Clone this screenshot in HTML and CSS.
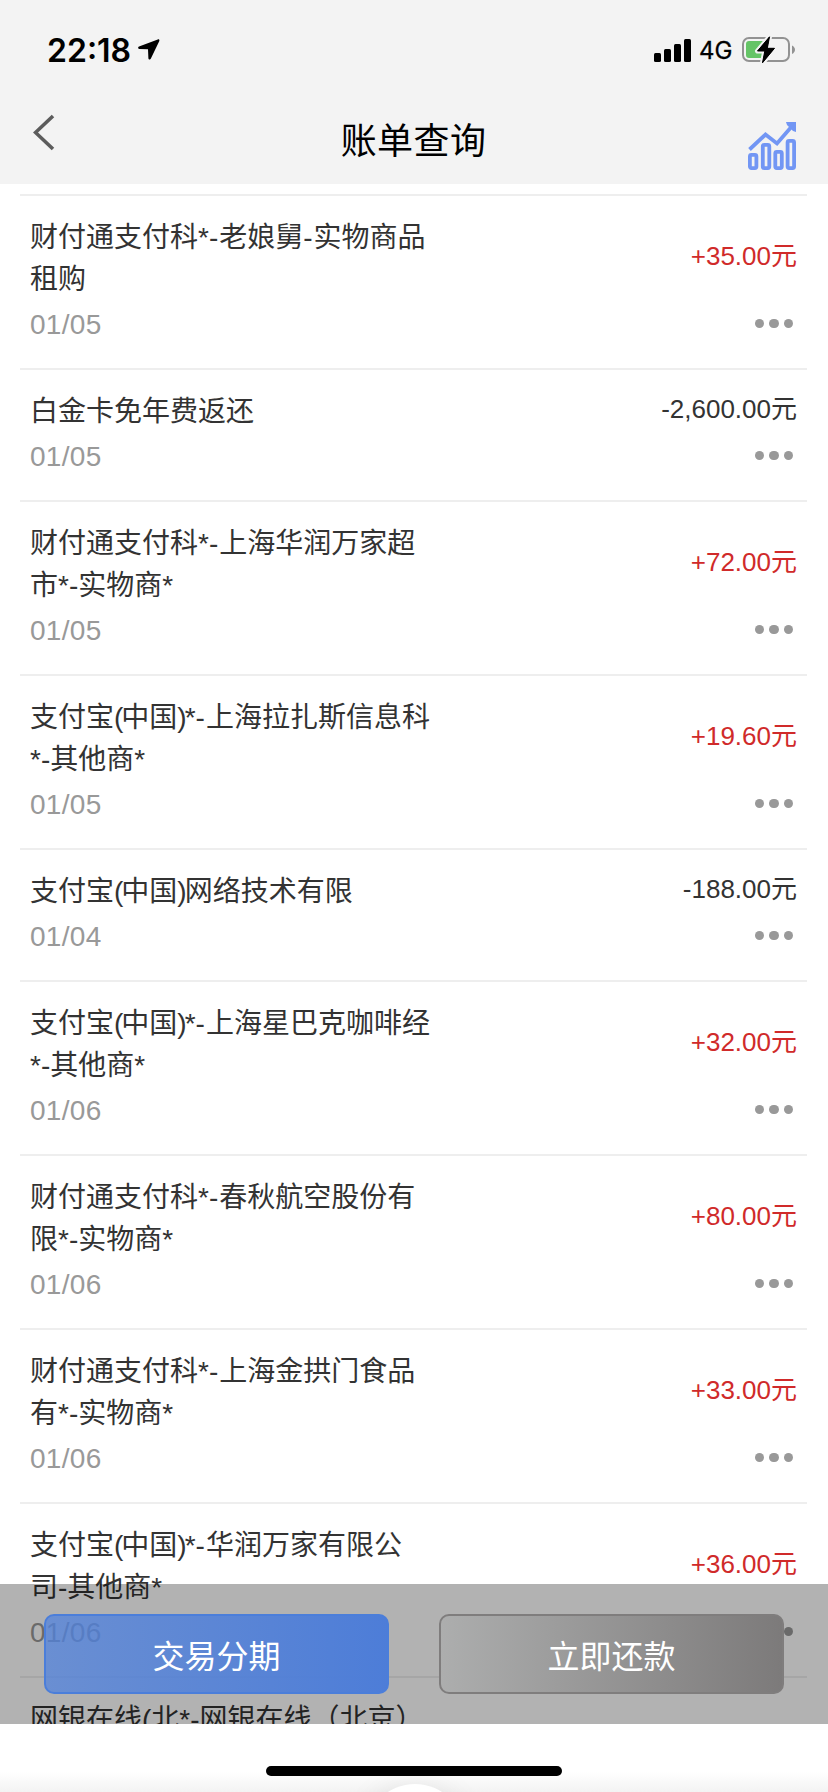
FILE: index.html
```html
<!DOCTYPE html>
<html lang="zh-CN">
<head>
<meta charset="utf-8">
<title>账单查询</title>
<link rel="stylesheet" href="styles.css">
</head>
<body>
<div class="screen">
  <header class="header">
    <div class="status">
      <div class="status-left">
        <span class="time">22:18</span>
        <svg class="location" width="22" height="22" viewBox="0 0 22 22"><path d="M19.8 .4 1 7.6C-.4 8.2 0 9.8 1.300 9.900L10 10.200 10.400 19.200C10.500 20.900 12.200 21 12.900 19.600L21.200 2.200C21.800 .9 21 0 19.800 .4Z"/></svg>
      </div>
      <div class="status-right">
        <svg class="signal" width="37" height="23" viewBox="0 0 37 23"><rect y="14" width="7" height="9" rx="1.500"/><rect x="10" y="10" width="7" height="13" rx="1.500"/><rect x="20" y="5" width="7" height="18" rx="1.500"/><rect x="30" width="7" height="23" rx="1.500"/></svg>
        <span class="network">4G</span>
        <svg class="battery" width="53" height="28" viewBox="0 0 53 28"><rect x="1" y="2" width="46" height="23" rx="6" fill="none" stroke="#929292" stroke-width="2"/><rect x="4" y="5" width="21" height="17" rx="3" fill="#65c466"/><path d="M50 9.500c4 2 4 6.500 0 8.500z" fill="#929292"/><path d="M27.500.8 15.500 15h7.300L20.500 26.800 32.500 12.300h-7.200z" fill="#000" stroke="#f3f3f3" stroke-width="5" paint-order="stroke" stroke-linejoin="round"/><path d="M27.500.8 15.500 15h7.300L20.500 26.800 32.500 12.300h-7.200z" fill="#000" stroke="#000" stroke-linejoin="round"/></svg>
      </div>
    </div>
    <nav class="navbar">
      <svg class="back" width="22" height="38" viewBox="0 0 22 38"><path d="M20 2 2.500 18.500 20 35" fill="none" stroke="#5c5c5c" stroke-width="3.600"/></svg>
      <h1 class="title">账单查询</h1>
      <svg class="chart" width="48" height="48" viewBox="0 0 48 48" fill="none" stroke="#7296f4" stroke-width="3.800"><rect x="1.900" y="32.900" width="6.500" height="13.200" rx="1.500"/><rect x="14.800" y="22.900" width="6.500" height="23.200" rx="1.500"/><rect x="27.300" y="29.900" width="6.500" height="16.200" rx="1.500"/><rect x="39.600" y="18.900" width="6.500" height="27.200" rx="1.500"/><path d="M1.500 27.500 17.500 12.500 29 21.500 45 3"/><path d="M38 0h10v10l-3-1L39 3z" fill="#7296f4" stroke="none"/></svg>
    </nav>
  </header>

  <main class="bills">
    <article class="bill"><div class="info"><p class="name">财付通支付科*<b>-</b>老娘舅<b>-</b>实物商品<br>租购</p><time class="date">01/05</time></div><div class="side"><span class="amount plus">+35.00元</span><span class="more"><i></i><i></i><i></i></span></div></article>
    <article class="bill"><div class="info"><p class="name">白金卡免年费返还</p><time class="date">01/05</time></div><div class="side"><span class="amount">-2,600.00元</span><span class="more"><i></i><i></i><i></i></span></div></article>
    <article class="bill"><div class="info"><p class="name">财付通支付科*<b>-</b>上海华润万家超<br>市*-实物商*</p><time class="date">01/05</time></div><div class="side"><span class="amount plus">+72.00元</span><span class="more"><i></i><i></i><i></i></span></div></article>
    <article class="bill"><div class="info"><p class="name">支付宝<u>(</u>中国<u>)</u>*<b>-</b>上海拉扎斯信息科<br>*-其他商*</p><time class="date">01/05</time></div><div class="side"><span class="amount plus">+19.60元</span><span class="more"><i></i><i></i><i></i></span></div></article>
    <article class="bill"><div class="info"><p class="name">支付宝<u>(</u>中国<u>)</u>网络技术有限</p><time class="date">01/04</time></div><div class="side"><span class="amount">-188.00元</span><span class="more"><i></i><i></i><i></i></span></div></article>
    <article class="bill"><div class="info"><p class="name">支付宝<u>(</u>中国<u>)</u>*<b>-</b>上海星巴克咖啡经<br>*-其他商*</p><time class="date">01/06</time></div><div class="side"><span class="amount plus">+32.00元</span><span class="more"><i></i><i></i><i></i></span></div></article>
    <article class="bill"><div class="info"><p class="name">财付通支付科*<b>-</b>春秋航空股份有<br>限*-实物商*</p><time class="date">01/06</time></div><div class="side"><span class="amount plus">+80.00元</span><span class="more"><i></i><i></i><i></i></span></div></article>
    <article class="bill"><div class="info"><p class="name">财付通支付科*<b>-</b>上海金拱门食品<br>有*-实物商*</p><time class="date">01/06</time></div><div class="side"><span class="amount plus">+33.00元</span><span class="more"><i></i><i></i><i></i></span></div></article>
    <article class="bill"><div class="info"><p class="name">支付宝<u>(</u>中国<u>)</u>*<b>-</b>华润万家有限公<br>司-其他商*</p><time class="date">01/06</time></div><div class="side"><span class="amount plus">+36.00元</span><span class="more"><i></i><i></i><i></i></span></div></article>
    <article class="bill"><div class="info"><p class="name">网银在线(北*-网银在线（北京）</p></div></article>
    <div class="actions">
      <button class="action installment">交易分期</button>
      <button class="action repay">立即还款</button>
    </div>
  </main>

  <footer class="footer">
    <span class="fab"></span>
    <span class="home-indicator"></span>
  </footer>
</div>
</body>
</html>
```

FILE: styles.css
```css
* { box-sizing: border-box; }
body { margin: 0; background: #fff; font-family: "Liberation Sans", "Noto Sans CJK SC", sans-serif; }
p, h1 { margin: 0; }
svg { display: block; flex: none; }

.screen { width: 828px; height: 1792px; display: flex; flex-direction: column; overflow: hidden; }

.header { height: 184px; flex: none; background: #f3f3f3; }
.status { height: 100px; padding: 0 33px 0 47px; display: flex; justify-content: space-between; align-items: center; }
.status-left, .status-right { display: flex; align-items: center; }
.time { padding-top: 1px; font: 600 32px/40px Inter, sans-serif; }
.location { margin-left: 7px; }
.network { margin: 2px 0 0 8px; width: 34px; font: 400 24px/30px Inter, sans-serif; -webkit-text-stroke: .3px #000; }
.battery { margin-left: 9px; }
.navbar { height: 84px; padding: 0 32px 0 33px; display: grid; grid-template-columns: 48px 1fr 48px; }
.back { margin-top: 14px; }
.title { margin: 16px 2px 0 0; font-size: 36px; line-height: 52px; font-weight: 400; letter-spacing: .4px; text-align: center; color: #000; }
.chart { margin-top: 22px; }

.bills { position: relative; height: 1540px; flex: none; padding: 10px 21px 0 20px; overflow: hidden; }
.bill { display: flex; justify-content: space-between; border-top: 2px solid #eee; padding: 21px 10px 22px 10px; }
.name { font-size: 28px; line-height: 42px; color: #333; white-space: nowrap; }
.name b { font-weight: 400; letter-spacing: 1px; }
.name u { text-decoration: none; letter-spacing: -2px; }
.date { display: block; margin-top: 3px; font-size: 28px; line-height: 42px; letter-spacing: .3px; color: #999; }
.side { display: flex; flex-direction: column; justify-content: space-between; align-items: flex-end; }
.amount { margin-top: auto; margin-bottom: auto; padding-bottom: 24px; font-size: 26px; line-height: 32px; color: #333; }
.amount.plus { color: #d02a2a; }
.more { display: flex; gap: 5px; padding: 0 4px 18px 0; }
.more i { width: 9.500px; height: 9.500px; border-radius: 50%; background: #999; }

.actions { position: absolute; left: 0; right: 0; bottom: 0; height: 140px; padding: 0 44px; display: flex; align-items: center; justify-content: space-between; background: rgba(0, 0, 0, .3); }
.action { width: 345px; height: 80px; padding: 6px 0 0; border-radius: 10px; font: 32px/48px "Liberation Sans", "Noto Sans CJK SC", sans-serif; color: #fff; }
.installment { border: 2px solid #4b7eda; background: linear-gradient(90deg, rgba(82, 131, 221, .75), #4d7dd8) border-box; }
.repay { border: 2px solid #7f7d7d; background: linear-gradient(90deg, #adaeae, #7c7a7a) border-box; }

.footer { position: relative; flex: 1; overflow: hidden; background: linear-gradient(#fff 48px, #f3f3f3); }
.fab { position: absolute; left: 365px; top: 60px; width: 100px; height: 100px; border-radius: 50%; background: #fff; box-shadow: 0 0 30px rgba(0, 0, 0, .08); }
.home-indicator { position: absolute; left: 266px; top: 42px; width: 296px; height: 10px; border-radius: 5px; background: #000; }
```
